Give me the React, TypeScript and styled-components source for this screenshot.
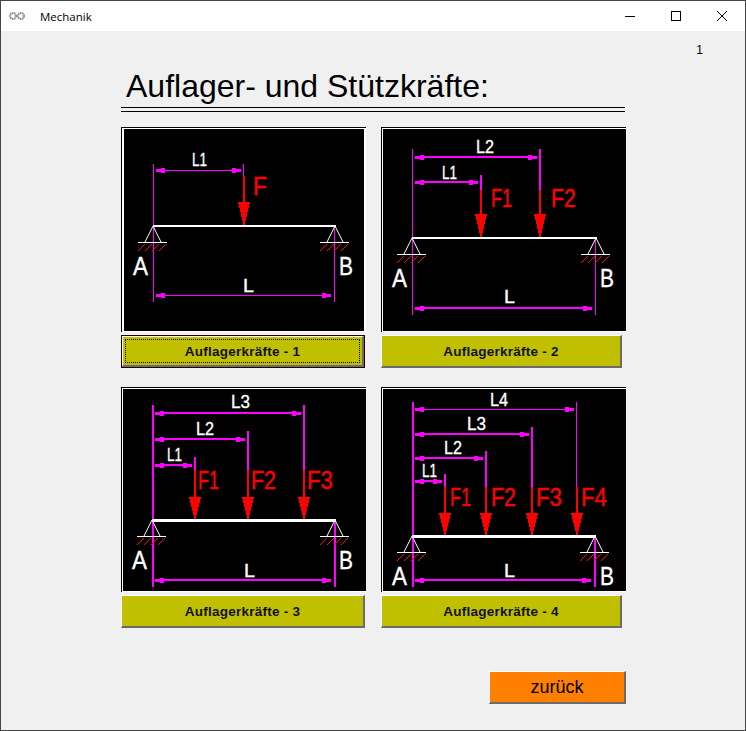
import React from "react";
import styled, { createGlobalStyle, css } from "styled-components";

const MAGENTA = "#ff00ff";
const RED = "#ff0000";

type Dim = { y: number; from: number; to: number; weight: number };
type Force = { x: number; top: number; weight: number; label: string; lx: number };
type Txt = { t: string; x: number; y: number };

type Diagram = {
  viewBox: string;
  leftX: number;
  rightX: number;
  extTop: number;
  extBottom: number;
  extWeight: number;
  beamY: number;
  beamWeight: number;
  bottomDim: number;
  bottomWeight: number;
  headTop: number;
  redTop: number;
  labelBase: number;
  abBase: number;
  ax: number;
  bx: number;
  dims: Dim[];
  forces: Force[];
  texts: Txt[];
};

// label widths as measured, the CAD font is narrower than Liberation
const labelWidth: Record<string, number> = {
  F: 14,
  F1: 21,
  F2: 25,
  F3: 26,
  F4: 26,
  L: 11,
  L1: 15,
  L2: 18,
  L3: 19,
  L4: 18,
  A: 15,
  B: 14,
};

const diagrams: Diagram[] = [
  {
    viewBox: "124 129 240 202",
    leftX: 153,
    rightX: 334,
    extTop: 164,
    extBottom: 302,
    extWeight: 1,
    beamY: 226,
    beamWeight: 2,
    bottomDim: 295,
    bottomWeight: 1,
    headTop: 202,
    redTop: 176,
    labelBase: 195,
    abBase: 275,
    ax: 133,
    bx: 339,
    dims: [{ y: 170, from: 153, to: 244, weight: 1 }],
    forces: [{ x: 244, top: 164, weight: 1, label: "F", lx: 253 }],
    texts: [
      { t: "L1", x: 192, y: 166 },
      { t: "L", x: 243, y: 292 },
    ],
  },
  {
    viewBox: "383 129 243 202",
    leftX: 412,
    rightX: 595,
    extTop: 149,
    extBottom: 315,
    extWeight: 1,
    beamY: 238,
    beamWeight: 2,
    bottomDim: 308,
    bottomWeight: 2,
    headTop: 214,
    redTop: 190,
    labelBase: 207,
    abBase: 287,
    ax: 392,
    bx: 600,
    dims: [
      { y: 157, from: 412, to: 540, weight: 2 },
      { y: 182, from: 412, to: 481, weight: 2 },
    ],
    forces: [
      { x: 481, top: 175, weight: 2, label: "F1", lx: 491 },
      { x: 540, top: 149, weight: 2, label: "F2", lx: 551 },
    ],
    texts: [
      { t: "L2", x: 476, y: 153 },
      { t: "L1", x: 442, y: 179 },
      { t: "L", x: 504, y: 303 },
    ],
  },
  {
    viewBox: "123 389 243 202",
    leftX: 152,
    rightX: 334,
    extTop: 405,
    extBottom: 587,
    extWeight: 2,
    beamY: 520,
    beamWeight: 3,
    bottomDim: 580,
    bottomWeight: 2,
    headTop: 497,
    redTop: 470,
    labelBase: 489,
    abBase: 569,
    ax: 132,
    bx: 339,
    dims: [
      { y: 413, from: 152, to: 304, weight: 2 },
      { y: 439, from: 152, to: 248, weight: 2 },
      { y: 465, from: 152, to: 195, weight: 2 },
    ],
    forces: [
      { x: 195, top: 457, weight: 2, label: "F1", lx: 198 },
      { x: 248, top: 431, weight: 2, label: "F2", lx: 251 },
      { x: 304, top: 405, weight: 2, label: "F3", lx: 307 },
    ],
    texts: [
      { t: "L3", x: 231, y: 408 },
      { t: "L2", x: 196, y: 435 },
      { t: "L1", x: 167, y: 461 },
      { t: "L", x: 244, y: 577 },
    ],
  },
  {
    viewBox: "383 389 243 202",
    leftX: 412,
    rightX: 594,
    extTop: 402,
    extBottom: 587,
    extWeight: 2,
    beamY: 536,
    beamWeight: 3,
    bottomDim: 580,
    bottomWeight: 2,
    headTop: 513,
    redTop: 487,
    labelBase: 506,
    abBase: 585,
    ax: 392,
    bx: 600,
    dims: [
      { y: 409, from: 412, to: 577, weight: 1 },
      { y: 434, from: 412, to: 532, weight: 2 },
      { y: 458, from: 412, to: 486, weight: 2 },
      { y: 481, from: 412, to: 445, weight: 2 },
    ],
    forces: [
      { x: 445, top: 474, weight: 2, label: "F1", lx: 450 },
      { x: 486, top: 451, weight: 2, label: "F2", lx: 491 },
      { x: 532, top: 427, weight: 2, label: "F3", lx: 536 },
      { x: 577, top: 402, weight: 1, label: "F4", lx: 581 },
    ],
    texts: [
      { t: "L4", x: 490, y: 406 },
      { t: "L3", x: 467, y: 430 },
      { t: "L2", x: 444, y: 454 },
      { t: "L1", x: 422, y: 477 },
      { t: "L", x: 504, y: 577 },
    ],
  },
];

const DimLine = ({ y, from, to, weight }: Dim) => (
  <g fill={MAGENTA}>
    <rect x={from + 3} y={y - (weight === 2 ? 1 : 0)} width={to - from - 6} height={weight} />
    <rect x={from + 3} y={y - 1} width={8} height={3} />
    <rect x={from + 8} y={y - 2} width={4} height={5} />
    <rect x={to - 12} y={y - 2} width={4} height={5} />
    <rect x={to - 11} y={y - 1} width={8} height={3} />
  </g>
);

const Support = ({ x, y }: { x: number; y: number }) => (
  <g shapeRendering="auto">
    <path d={`M${x} ${y}L${x - 8} ${y + 16}M${x} ${y}L${x + 8} ${y + 16}`} stroke="#fff" fill="none" />
    <rect x={x - 15} y={y + 16} width={29} height={1} fill="#fff" />
    <path
      d={[-15, -8, -1, 6]
        .map((d) => `M${x + d} ${y + 25}L${x + d + 7} ${y + 18}`)
        .join("")}
      stroke={RED}
      fill="none"
    />
  </g>
);

const ForceArrow = ({ f, d }: { f: Force; d: Diagram }) => (
  <g>
    <rect x={f.x - 1} y={f.top} width={f.weight} height={d.redTop - f.top} fill={MAGENTA} />
    <rect x={f.x - 1} y={d.redTop} width={2} height={d.headTop - d.redTop} fill={RED} />
    <path d={`M${f.x - 6} ${d.headTop}H${f.x + 6}L${f.x} ${d.beamY + 1}Z`} fill={RED} />
    <DiagramLabel
      x={f.lx}
      y={d.labelBase}
      $color={RED}
      $size={25}
      textLength={labelWidth[f.label]}
      lengthAdjust="spacingAndGlyphs"
    >
      {f.label}
    </DiagramLabel>
  </g>
);

const BeamDiagram = ({ d }: { d: Diagram }) => (
  <DiagramSvg viewBox={d.viewBox} shapeRendering="crispEdges">
    <rect x={d.leftX} y={d.extTop} width={d.extWeight} height={d.extBottom - d.extTop} fill={MAGENTA} />
    <rect x={d.rightX} y={d.beamY} width={d.extWeight} height={d.extBottom - d.beamY} fill={MAGENTA} />
    {d.dims.map((dim) => (
      <DimLine key={dim.y} {...dim} />
    ))}
    <DimLine y={d.bottomDim} from={d.leftX} to={d.rightX} weight={d.bottomWeight} />
    {d.forces.map((f) => (
      <ForceArrow key={f.label} f={f} d={d} />
    ))}
    <rect x={d.leftX} y={d.beamY - 1} width={d.rightX - d.leftX + 2} height={d.beamWeight} fill="#fff" />
    <Support x={d.leftX} y={d.beamY} />
    <Support x={d.rightX + 1} y={d.beamY} />
    {[
      { t: "A", x: d.ax },
      { t: "B", x: d.bx },
    ].map((s) => (
      <DiagramLabel
        key={s.t}
        x={s.x}
        y={d.abBase}
        $color="#fff"
        $size={25}
        textLength={labelWidth[s.t]}
        lengthAdjust="spacingAndGlyphs"
      >
        {s.t}
      </DiagramLabel>
    ))}
    {d.texts.map((t) => (
      <DiagramLabel
        key={t.t}
        x={t.x}
        y={t.y}
        $color="#fff"
        $size={18}
        textLength={labelWidth[t.t]}
        lengthAdjust="spacingAndGlyphs"
      >
        {t.t}
      </DiagramLabel>
    ))}
  </DiagramSvg>
);

const cards = [
  { d: diagrams[0], label: "Auflagerkräfte - 1", wide: true, focused: true, framed: true },
  { d: diagrams[1], label: "Auflagerkräfte - 2", wide: false, focused: false, framed: false },
  { d: diagrams[2], label: "Auflagerkräfte - 3", wide: true, focused: false, framed: false },
  { d: diagrams[3], label: "Auflagerkräfte - 4", wide: false, focused: false, framed: false },
];

const GearIcon = () => (
  <svg width="16" height="10" viewBox="0 0 16 10" fill="none" stroke="#8e8e8e" strokeWidth="2">
    <circle cx="4" cy="5" r="3" strokeDasharray="1.6 0.5" />
    <circle cx="12" cy="5" r="3" strokeDasharray="1.6 0.5" />
  </svg>
);

const MinimizeIcon = () => (
  <svg width="10" height="10" viewBox="0 0 10 10" shapeRendering="crispEdges">
    <rect x="0" y="5" width="10" height="1" fill="#000" />
  </svg>
);

const MaximizeIcon = () => (
  <svg width="10" height="10" viewBox="0 0 10 10" shapeRendering="crispEdges">
    <rect x="0.5" y="0.5" width="9" height="9" fill="none" stroke="#000" />
  </svg>
);

const CloseIcon = () => (
  <svg width="10" height="10" viewBox="0 0 10 10">
    <path d="M0 0L10 10M10 0L0 10" stroke="#000" fill="none" />
  </svg>
);

export default function App() {
  return (
    <>
      <GlobalStyle />
      <Window>
        <TitleBar>
          <GearIcon />
          <TitleText>Mechanik</TitleText>
          <WindowControls>
            <ControlSlot>
              <MinimizeIcon />
            </ControlSlot>
            <ControlSlot>
              <MaximizeIcon />
            </ControlSlot>
            <ControlSlot>
              <CloseIcon />
            </ControlSlot>
          </WindowControls>
        </TitleBar>
        <Body>
          <PageNumber>1</PageNumber>
          <Heading>Auflager- und Stützkräfte:</Heading>
          <DoubleRule />
          <CardGrid>
            {cards.map((c) => (
              <Card key={c.label}>
                <Picture $framed={c.framed}>
                  <BeamDiagram d={c.d} />
                </Picture>
                <ActionButton $wide={c.wide} $focused={c.focused}>
                  <span>{c.label}</span>
                </ActionButton>
              </Card>
            ))}
          </CardGrid>
          <Footer>
            <BackButton>zurück</BackButton>
          </Footer>
        </Body>
      </Window>
    </>
  );
}

const GlobalStyle = createGlobalStyle`
  html, body {
    margin: 0;
    padding: 0;
    background: #f0f0f0;
  }
`;

const Window = styled.div`
  width: 746px;
  height: 731px;
  box-sizing: border-box;
  border: 1px solid #444444;
  display: flex;
  flex-direction: column;
  background: #f0f0f0;
  font-family: "Liberation Sans", Arial, sans-serif;
  overflow: hidden;
`;

const TitleBar = styled.div`
  height: 30px;
  flex: none;
  background: #fff;
  display: flex;
  align-items: center;
  padding-left: 8px;
`;

const TitleText = styled.div`
  font-family: "Open Sans", sans-serif;
  font-size: 11.5px;
  color: #000;
  margin-left: 15px;
`;

const WindowControls = styled.div`
  margin-left: auto;
  display: flex;
  height: 100%;
`;

const ControlSlot = styled.div`
  width: 46px;
  display: flex;
  align-items: center;
  justify-content: center;
`;

const Body = styled.div`
  flex: 1;
  padding: 13px 0 0 120px;
  display: flex;
  flex-direction: column;
`;

const PageNumber = styled.div`
  align-self: flex-end;
  margin-right: 42px;
  font-size: 12px;
  line-height: 13px;
  color: #000;
`;

const Heading = styled.h1`
  margin: 10px 0 0 5px;
  font-size: 32px;
  line-height: 38px;
  font-weight: 400;
  color: #000;
`;

const DoubleRule = styled.div`
  width: 504px;
  height: 3px;
  margin-top: 2px;
  border-top: 1px solid #000;
  border-bottom: 1px solid #000;
`;

const CardGrid = styled.div`
  display: grid;
  grid-template-columns: 245px 245px;
  column-gap: 15px;
  row-gap: 19px;
  margin-top: 15px;
`;

const Card = styled.div`
  display: flex;
  flex-direction: column;
  gap: 3px;
`;

const Picture = styled.div<{ $framed: boolean }>`
  height: 205px;
  box-sizing: border-box;
  border-top: 1px solid #000;
  border-left: 1px solid #000;
  padding: ${(p) => (p.$framed ? "1px 2px 1px 2px" : "1px 0 1px 1px")};
  background: #fff;
  display: flex;
`;

const DiagramSvg = styled.svg`
  display: block;
  flex: 1;
  width: 100%;
  height: 100%;
  min-width: 0;
  background: #000;
`;

const DiagramLabel = styled.text<{ $size: number; $color: string }>`
  font-family: "Liberation Sans", Arial, sans-serif;
  font-size: ${(p) => p.$size}px;
  fill: ${(p) => p.$color};
  stroke: ${(p) => p.$color};
  stroke-width: 0.35px;
`;

const bevel = css`
  box-sizing: border-box;
  border-style: solid;
  border-width: 1px 2px 2px 1px;
  border-color: #fff #6b6b6b #6b6b6b #fff;
`;

const ActionButton = styled.div<{ $wide: boolean; $focused: boolean }>`
  ${bevel}
  width: ${(p) => (p.$wide ? "244px" : "241px")};
  height: 33px;
  background: #c0c000;
  display: flex;
  align-items: center;
  justify-content: center;
  position: relative;
  font-size: 13.5px;
  font-weight: 700;
  letter-spacing: 0.25px;
  color: #111;
  ${(p) =>
    p.$focused &&
    css`
      outline: 1px solid #220000;
      outline-offset: -1px;
      border-width: 2px 3px 3px 2px;
      &::after {
        content: "";
        position: absolute;
        inset: 2px;
        border: 1px dotted #000;
      }
    `}
`;

const Footer = styled.div`
  display: flex;
  justify-content: flex-end;
  width: 505px;
  margin-top: 43px;
`;

const BackButton = styled.div`
  ${bevel}
  width: 137px;
  height: 33px;
  background: #ff8000;
  display: flex;
  align-items: center;
  justify-content: center;
  font-size: 18px;
  color: #000;
`;
